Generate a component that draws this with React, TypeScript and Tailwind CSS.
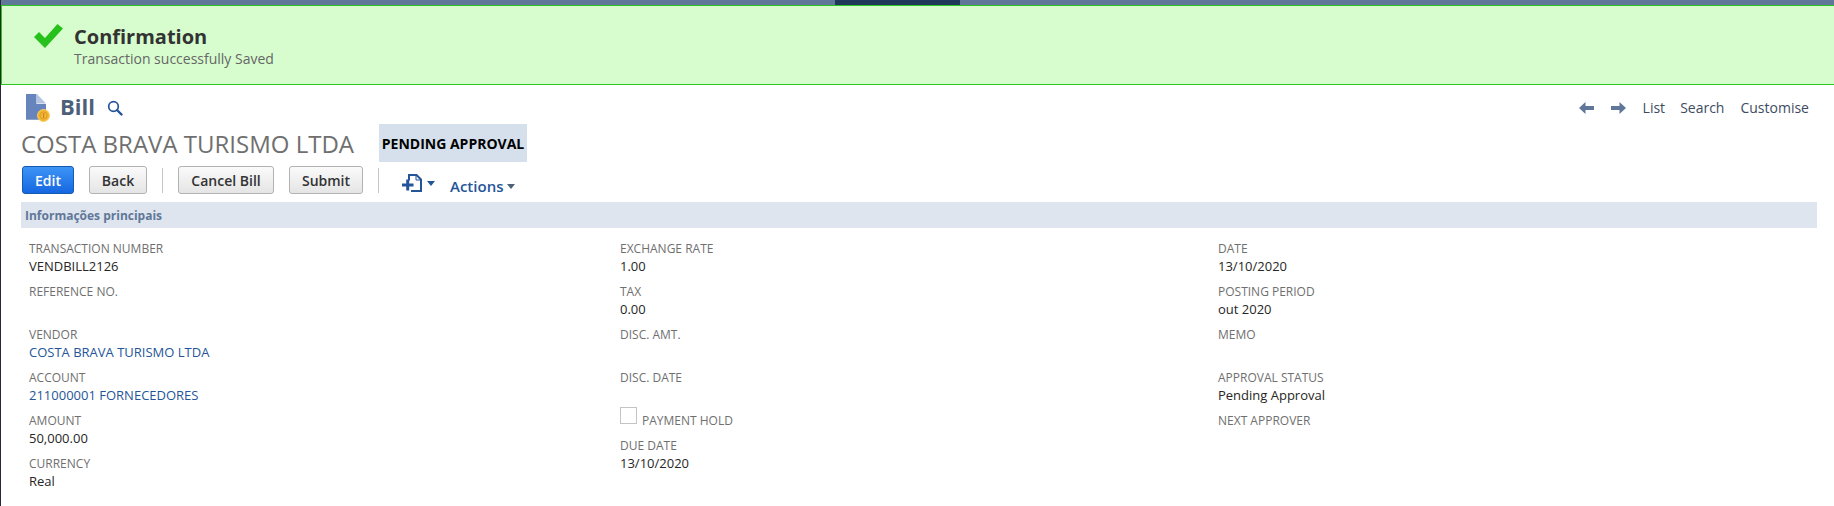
const Field = ({ label, value, link }: { label: string; value?: string; link?: boolean }) => (
  <div className="h-[43px]">
    <div className="h-[18px] pt-px text-[12px] leading-[18px] text-[#6f6f6f]">{label}</div>
    <div className={`h-[18px] text-[13px] leading-[18px] ${link ? "text-[#255599]" : "text-[#262626]"}`}>{value}</div>
  </div>
);

const Btn = ({ children, w }: { children: React.ReactNode; w: string }) => (
  <button className={`h-[28px] ${w} pt-px rounded-[3px] border border-[#b2b2b2] bg-gradient-to-b from-[#fafafa] to-[#e5e5e5] text-[14px] font-semibold leading-none text-[#333333]`}>
    {children}
  </button>
);

const Sep = () => <div className="w-px h-[25px] bg-[#c4c4c4]" />;

const Caret = ({ color }: { color: string }) => (
  <svg width="8" height="5" viewBox="0 0 8 5" className="block"><path d="M0 0h8L4 5z" fill={color} /></svg>
);

export default function App() {
  return (
    <div className="min-h-[506px] w-[1834px] bg-white border-l border-[#2c2536] font-['Open_Sans',sans-serif] overflow-hidden">
      <div className="h-[5px] bg-[#607799] flex -ml-px">
        <div className="w-[835px]" />
        <div className="w-[125px] bg-[#21375a]" />
      </div>
      <div className="h-[80px] bg-[#d7fdce] border-y border-[#2bc71f] border-l flex items-start pl-[32px] pt-[15px]">
        <svg width="29" height="24" viewBox="0 0 29 24" className="mt-[3px] shrink-0">
          <path d="M0 13l5-5 6 6L23.500 0 29 4.500 11 24z" fill="#27c11b" />
        </svg>
        <div className="ml-[11px]">
          <div className="text-[20px] font-bold leading-[28px] text-[#333333] mt-[2px]">Confirmation</div>
          <div className="text-[14px] leading-[22px] text-[#666666] -mt-[3px]">Transaction successfully Saved</div>
        </div>
      </div>

      <div className="pl-[20px] pr-[16px]">
        <div className="flex items-center h-[39px]">
          <div className="flex items-center flex-1 pl-[5px] mt-[4px]">
            <svg width="25" height="28" viewBox="0 0 25 28" className="shrink-0 mt-[3px]">
              <path d="M0 0h10.500v10H20v15.700H0z" fill="#6884bd" />
              <path d="M11 0l9 9.500h-9z" fill="#b4c3e0" />
              <circle cx="17.500" cy="21.500" r="6" fill="#f2b632" stroke="#f9cf5f" />
              <circle cx="17.500" cy="21.500" r="3.600" fill="none" stroke="#d9962a" strokeWidth="0.8" />
              <path d="M17 19h1.200v5H17z" fill="#c98a1e" />
            </svg>
            <span className="ml-[9px] text-[22px] font-bold text-[#4d5f79]">Bill</span>
            <svg width="16" height="16" viewBox="0 0 16 16" className="ml-[12px] mt-[3px]">
              <circle cx="6.500" cy="6.500" r="4.800" fill="none" stroke="#255599" strokeWidth="1.700" />
              <path d="M10 10l4.500 4.500" stroke="#255599" strokeWidth="2.400" strokeLinecap="round" />
            </svg>
          </div>
          <div className="flex items-center text-[14px] text-[#3d4b5f] mt-[5px] mr-[9px]">
            <svg width="15" height="12" viewBox="0 0 15 12" className="mt-[2px]"><path d="M6.500 0L0 6l6.500 6V8H15V4H6.500z" fill="#607799" /></svg>
            <svg width="15" height="12" viewBox="0 0 15 12" className="ml-[17px] mt-[2px]"><path d="M8.500 0L15 6l-6.500 6V8H0V4h8.500z" fill="#607799" /></svg>
            <span className="ml-[17px]">List</span>
            <span className="ml-[15px]">Search</span>
            <span className="ml-[16px]">Customise</span>
          </div>
        </div>

        <div className="flex items-center h-[38px]">
          <div className="text-[24px] text-[#6f6f6f] leading-none pt-[2px]">COSTA BRAVA TURISMO LTDA</div>
          <div className="ml-[25px] h-[38px] w-[148px] bg-[#d5e0ec] flex items-center justify-center text-[14px] font-bold text-black">PENDING APPROVAL</div>
        </div>

        <div className="flex items-center h-[40px] pb-[4px] pl-px">
          <button className="h-[28px] w-[52px] pt-px rounded-[3px] border border-[#125ab2] bg-gradient-to-b from-[#3d94f6] to-[#1467e0] text-[14px] font-semibold leading-none text-white">Edit</button>
          <div className="ml-[15px]"><Btn w="w-[58px]">Back</Btn></div>
          <div className="ml-[15px]"><Sep /></div>
          <div className="ml-[15px]"><Btn w="w-[96px]">Cancel Bill</Btn></div>
          <div className="ml-[15px]"><Btn w="w-[74px]">Submit</Btn></div>
          <div className="ml-[15px]"><Sep /></div>
          <svg width="20" height="18" viewBox="0 0 20 18" className="ml-[23px] mt-[6px] shrink-0">
            <path d="M7 6.500V1h7.500L19 5.500V17H9" fill="none" stroke="#255599" strokeWidth="2" />
            <path d="M14 1v5h5" fill="none" stroke="#255599" strokeWidth="1" />
            <path d="M0 9.500h11.500v3H0zM4.200 5.500h3v11h-3z" fill="#255599" />
          </svg>
          <div className="ml-[5px] mt-[6px]"><Caret color="#255599" /></div>
          <span className="ml-[15px] mt-[12px] text-[15px] font-semibold text-[#255599]">Actions</span>
          <div className="ml-[4px] mt-[13px]"><Caret color="#4d5f79" /></div>
        </div>

        <div className="h-[26px] w-[1796px] bg-[#dfe5ee] flex items-center pl-[4px] pt-[2px] text-[12px] font-bold text-[#607799]">Informações principais</div>

        <div className="flex pt-[11px] pl-[8px]">
          <div className="w-[591px]">
            <Field label="TRANSACTION NUMBER" value="VENDBILL2126" />
            <Field label="REFERENCE NO." />
            <Field label="VENDOR" value="COSTA BRAVA TURISMO LTDA" link />
            <Field label="ACCOUNT" value="211000001 FORNECEDORES" link />
            <Field label="AMOUNT" value="50,000.00" />
            <Field label="CURRENCY" value="Real" />
          </div>
          <div className="w-[598px]">
            <Field label="EXCHANGE RATE" value="1.00" />
            <Field label="TAX" value="0.00" />
            <Field label="DISC. AMT." />
            <Field label="DISC. DATE" />
            <div className="h-[25px] flex items-start">
              <div className="w-[17px] h-[17px] border border-[#c4c4c4] bg-white -mt-[4px]" />
              <span className="ml-[5px] pt-px h-[18px] text-[12px] leading-[18px] text-[#6f6f6f]">PAYMENT HOLD</span>
            </div>
            <Field label="DUE DATE" value="13/10/2020" />
          </div>
          <div>
            <Field label="DATE" value="13/10/2020" />
            <Field label="POSTING PERIOD" value="out 2020" />
            <Field label="MEMO" />
            <Field label="APPROVAL STATUS" value="Pending Approval" />
            <Field label="NEXT APPROVER" />
          </div>
        </div>
      </div>
    </div>
  );
}
